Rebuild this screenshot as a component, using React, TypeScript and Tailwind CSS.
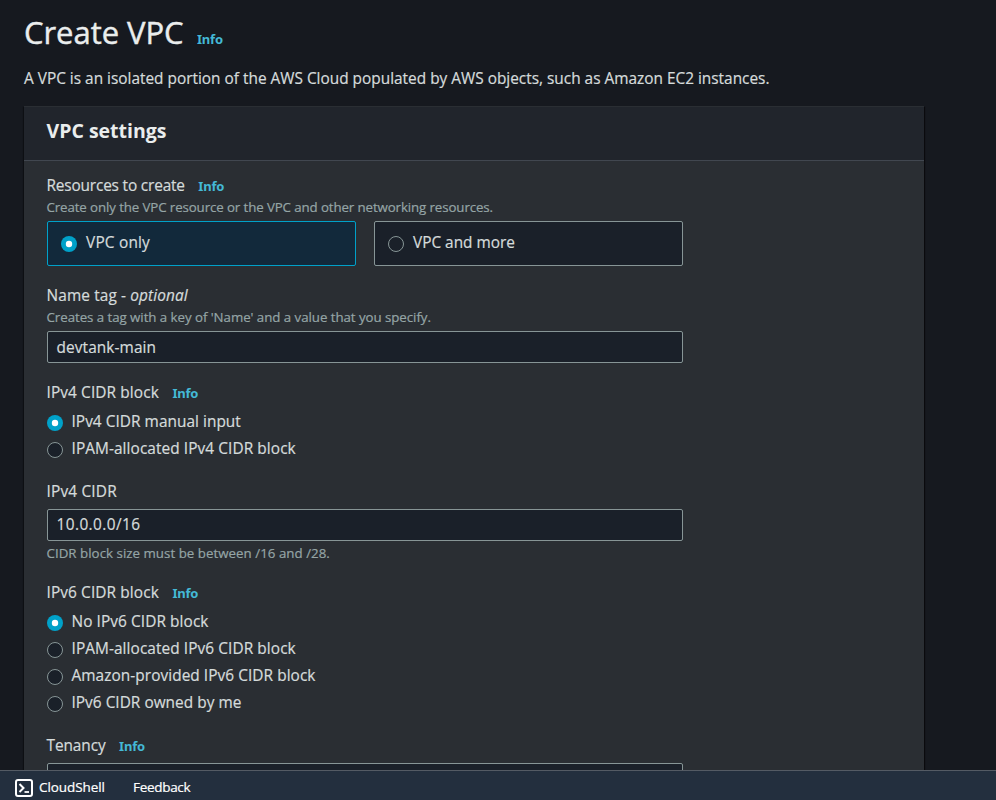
import type { ReactNode } from "react";

function Info() {
  return (
    <a className="ml-[13.5px] font-['Noto_Sans',sans-serif] text-[13px] font-bold tracking-[-0.2px] text-[#44b9d6] [-webkit-text-stroke:0px]">
      Info
    </a>
  );
}

function Radio({ checked = false }: { checked?: boolean }) {
  return (
    <svg className="size-4 shrink-0" viewBox="0 0 16 16">
      {checked ? (
        <>
          <circle cx="8" cy="8" r="8" fill="#00a1c9" />
          <circle cx="8" cy="8" r="3.2" fill="#fff" />
        </>
      ) : (
        <circle cx="8" cy="8" r="7.5" fill="#1a2029" stroke="#879596" />
      )}
    </svg>
  );
}

function Label({ children, info = false, className = "" }: { children: ReactNode; info?: boolean; className?: string }) {
  return (
    <div className={`-ml-[0.5px] h-5 whitespace-nowrap leading-[22px] ${className}`}>
      {children}
      {info && <Info />}
    </div>
  );
}

function Hint({ children, className = "" }: { children: ReactNode; className?: string }) {
  return (
    <p className={`-ml-[0.5px] mt-1 h-4 whitespace-nowrap text-[13.3px] leading-4 text-[#95a5a6] ${className}`}>{children}</p>
  );
}

function Tile({ children, checked = false, className = "" }: { children: ReactNode; checked?: boolean; className?: string }) {
  return (
    <label
      className={`flex h-[45px] flex-1 rounded-[2px] border px-[13px] pt-[10px] ${
        checked ? "border-[#00a1c9] bg-[#12293b]" : "border-[#879596] bg-[#1a2029]"
      }`}
    >
      <span className="pt-1">
        <Radio checked={checked} />
      </span>
      <span className={`ml-[9px] leading-[22px] ${className}`}>{children}</span>
    </label>
  );
}

function Option({ children, checked = false, className = "" }: { children: ReactNode; checked?: boolean; className?: string }) {
  return (
    <label className="-ml-[0.5px] flex h-5 whitespace-nowrap">
      <span className="pt-1">
        <Radio checked={checked} />
      </span>
      <span className={`ml-[9px] leading-[22px] ${className}`}>{children}</span>
    </label>
  );
}

const field = "h-8 w-full rounded-[2px] border border-[#879596] bg-[#1a2029] px-[8.5px]";

export default function App() {
  return (
    <div className="flex h-[800px] flex-col overflow-hidden bg-[#16191f] font-['Open_Sans',sans-serif] text-[15.4px] text-[#d5dbdb] [-webkit-text-stroke:0.2px]">
      <main className="h-[770px] shrink-0 overflow-hidden pl-6 pt-3">
        <h1 className="h-10 text-[31px] leading-10 tracking-[-0.05px] text-[#eaeded] [-webkit-text-stroke:0.4px]">
          Create VPC
          <Info />
        </h1>
        <p className="mt-[17px] h-5 whitespace-nowrap leading-5">
          A VPC is an isolated portion of the AWS Cloud populated by AWS objects, such as Amazon EC2 instances.
        </p>
        <section className="mt-[17px] h-[800px] w-[900px] bg-[#2a2e33] shadow-[0_1px_1px_0_rgba(0,0,0,0.5),1px_1px_1px_0_rgba(0,0,0,0.5),-1px_1px_1px_0_rgba(0,0,0,0.3)]">
          <header className="h-[55px] border-y border-t-[#2a2e33] border-b-[#414750] bg-[#21252c] pl-[22.5px] pt-3">
            <h2 className="text-[19.5px] font-bold leading-6 text-[#eaeded] [-webkit-text-stroke:0px]">VPC settings</h2>
          </header>
          <div className="w-[659px] pl-[23px] pt-[14px]">
            <Label info className="tracking-[-0.17px]">Resources to create</Label>
            <Hint className="tracking-[-0.11px]">Create only the VPC resource or the VPC and other networking resources.</Hint>
            <div className="mt-[6px] flex gap-[18px]">
              <Tile checked className="tracking-[0.2px]">VPC only</Tile>
              <Tile className="tracking-[-0.01px]">VPC and more</Tile>
            </div>

            <Label className="mt-[19px] tracking-[0.13px]">
              Name tag - <em className="tracking-[0.1px]">optional</em>
            </Label>
            <Hint className="tracking-[-0.05px]">Creates a tag with a key of 'Name' and a value that you specify.</Hint>
            <div className={`mt-[6px] pt-[5px] leading-[22px] tracking-[0.1px] ${field}`}>devtank-main</div>

            <Label info className="mt-[19px] tracking-[0.11px]">IPv4 CIDR block</Label>
            <div className="mt-[9px] flex flex-col gap-[7px]">
              <Option checked className="tracking-[0.04px]">IPv4 CIDR manual input</Option>
              <Option className="tracking-[0.08px]">IPAM-allocated IPv4 CIDR block</Option>
            </div>

            <Label className="mt-[23px] tracking-[0.18px]">IPv4 CIDR</Label>
            <div className={`mt-2 pt-1 leading-[22px] tracking-[0.42px] ${field}`}>10.0.0.0/16</div>
            <Hint className="tracking-[0.03px]">CIDR block size must be between /16 and /28.</Hint>

            <Label info className="mt-[21px] tracking-[0.11px]">IPv6 CIDR block</Label>
            <div className="mt-[9px] flex flex-col gap-[7px]">
              <Option checked className="tracking-[0.08px]">No IPv6 CIDR block</Option>
              <Option className="tracking-[0.08px]">IPAM-allocated IPv6 CIDR block</Option>
              <Option className="tracking-[0.06px]">Amazon-provided IPv6 CIDR block</Option>
              <Option className="tracking-[0.02px]">IPv6 CIDR owned by me</Option>
            </div>

            <Label info className="mt-[23px] tracking-[-0.08px]">Tenancy</Label>
            <div className={`mt-2 ${field}`} />
          </div>
        </section>
      </main>
      <footer className="flex h-[30px] shrink-0 items-start border-t border-[#545b64] bg-[#232f3e] pl-[15px] text-[13.5px] font-medium leading-5 text-white">
        <svg className="mt-2 size-[18px] shrink-0" viewBox="0 0 18 18" fill="none" stroke="#fff">
          <rect x="1" y="1" width="16" height="16" rx="2" strokeWidth="2" />
          <path d="M4.5 5 8.5 9 4.5 13" strokeWidth="2" />
          <path d="M9.5 13H14" strokeWidth="1.8" />
        </svg>
        <span className="ml-[6px] mt-[6px] w-[94px] tracking-[-0.08px]">CloudShell</span>
        <span className="mt-[6px] tracking-[-0.3px]">Feedback</span>
      </footer>
    </div>
  );
}
